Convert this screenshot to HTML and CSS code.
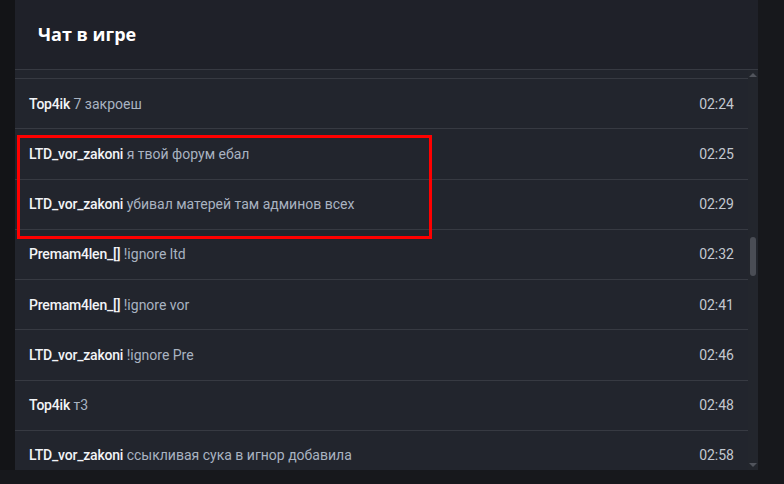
FILE: index.html
```html
<!DOCTYPE html>
<html lang="ru">
<head>
  <meta charset="UTF-8">
  <meta name="viewport" content="width=device-width, initial-scale=1.0">
  <title>Чат в игре</title>
  <link rel="stylesheet" href="styles.css">
</head>
<body>
  <div class="page">
    <div class="side-strip"></div>

    <div class="chat-panel">
      <div class="chat-header">
        <h1>Чат в игре</h1>
      </div>

      <div class="chat-body">
        <ul class="chat-list">
          <li class="chat-row cut-top"></li>
          <li class="chat-row">
            <span class="msg"><b class="nick">Top4ik</b> 7 закроеш</span>
            <span class="time">02:24</span>
          </li>
          <li class="chat-row">
            <span class="msg"><b class="nick">LTD_vor_zakoni</b> я твой форум ебал</span>
            <span class="time">02:25</span>
          </li>
          <li class="chat-row">
            <span class="msg"><b class="nick">LTD_vor_zakoni</b> убивал матерей там админов всех</span>
            <span class="time">02:29</span>
          </li>
          <li class="chat-row">
            <span class="msg"><b class="nick">Premam4len_[]</b> !ignore ltd</span>
            <span class="time">02:32</span>
          </li>
          <li class="chat-row">
            <span class="msg"><b class="nick">Premam4len_[]</b> !ignore vor</span>
            <span class="time">02:41</span>
          </li>
          <li class="chat-row">
            <span class="msg"><b class="nick">LTD_vor_zakoni</b> !ignore Pre</span>
            <span class="time">02:46</span>
          </li>
          <li class="chat-row">
            <span class="msg"><b class="nick">Top4ik</b> т3</span>
            <span class="time">02:48</span>
          </li>
          <li class="chat-row">
            <span class="msg"><b class="nick">LTD_vor_zakoni</b> ссыкливая сука в игнор добавила</span>
            <span class="time">02:58</span>
          </li>
        </ul>

        <div class="scrollbar">
          <span class="arrow up"></span>
          <div class="track">
            <div class="thumb"></div>
          </div>
          <span class="arrow down"></span>
        </div>
      </div>
    </div>
  </div>

  <!-- пометка поверх скриншота -->
  <div class="highlight"></div>
</body>
</html>
```

FILE: styles.css
```css
* {
  margin: 0;
  padding: 0;
  box-sizing: border-box;
}

body {
  font-family: Roboto, "Noto Sans", sans-serif;
  background: #17181c;
  width: 784px;
  height: 484px;
  overflow: hidden;
  position: relative;
}

.page {
  display: flex;
  height: 470px;
  width: 758px;
}

.side-strip {
  width: 15px;
  background: #131417;
}

.chat-panel {
  flex: 1;
  display: flex;
  flex-direction: column;
  background: #22252d;
}

.chat-header {
  height: 70px;
  background: #1f2129;
  border-bottom: 1px solid #373a42;
  display: flex;
  align-items: center;
  padding-left: 23px;
  padding-bottom: 1px;
}

.chat-header h1 {
  font-family: "Open Sans", sans-serif;
  font-size: 18px;
  font-weight: 700;
  color: #ffffff;
}

.chat-body {
  flex: 1;
  display: flex;
  overflow: hidden;
}

.chat-list {
  list-style: none;
  flex: 1;
  overflow: hidden;
}

.chat-row {
  height: 50.25px;
  display: flex;
  align-items: center;
  justify-content: space-between;
  padding: 0 14px;
  border-bottom: 1px solid #373a42;
  font-size: 14px;
}

.chat-row.cut-top {
  height: 9px;
}

.msg {
  color: #a9b3c1;
}

.nick {
  color: #f2f4f7;
  font-weight: 500;
  letter-spacing: -0.2px;
  -webkit-font-smoothing: antialiased;
}

.time {
  color: #c3c8d0;
}

.scrollbar {
  width: 10px;
  background: #23262d;
  display: flex;
  flex-direction: column;
  align-items: center;
}

.arrow {
  width: 0;
  height: 0;
  border-left: 4px solid transparent;
  border-right: 4px solid transparent;
}

.arrow.up {
  margin-top: 3px;
  border-bottom: 4px solid #51545c;
}

.arrow.down {
  margin-bottom: 3px;
  border-top: 4px solid #51545c;
}

.track {
  flex: 1;
  width: 100%;
  padding-top: 160px;
  display: flex;
  justify-content: center;
}

.thumb {
  width: 6px;
  height: 39px;
  border-radius: 3px;
  background: #4a4d55;
}

.highlight {
  position: absolute;
  left: 17px;
  top: 135px;
  width: 415px;
  height: 104px;
  border: 3px solid #ff0000;
}
```
